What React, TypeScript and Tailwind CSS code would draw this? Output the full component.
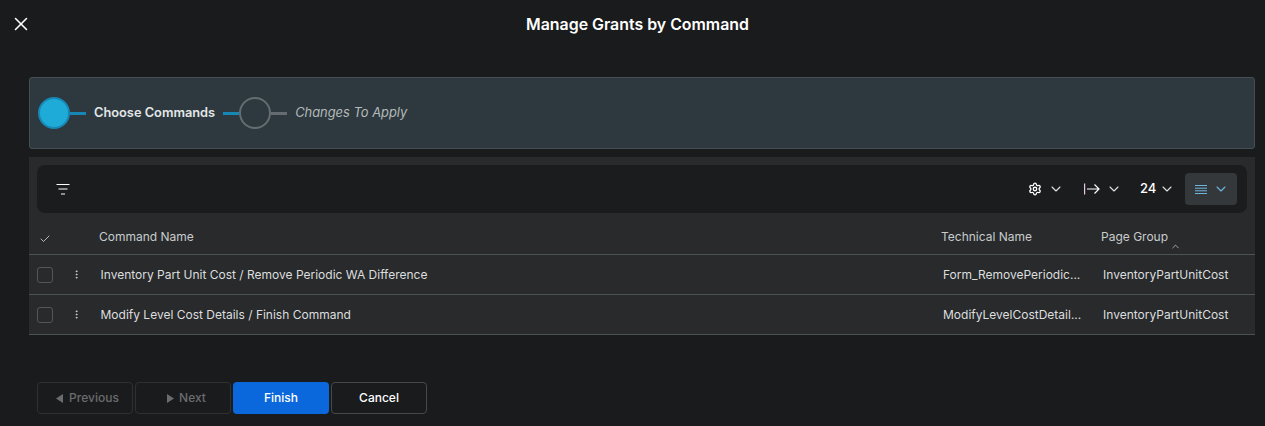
import React from "react";
import { ChevronDown, ChevronUp, Check, X, Settings, MoreVertical } from "lucide-react";

const rows = [
  {
    name: "Inventory Part Unit Cost / Remove Periodic WA Difference",
    tech: "Form_RemovePeriodic...",
    group: "InventoryPartUnitCost",
  },
  {
    name: "Modify Level Cost Details / Finish Command",
    tech: "ModifyLevelCostDetail...",
    group: "InventoryPartUnitCost",
  },
];

const App = () => {
  return (
    <div className="w-[1265px] h-[426px] overflow-hidden bg-[#1a1b1d] font-['Inter',sans-serif] text-white">
      <header className="relative h-[48px] flex items-center justify-center">
        <X className="absolute left-[10px] top-[13px] w-[22px] h-[22px] text-white" strokeWidth={1.7} />
        <h1 className="text-[15.9px] font-semibold ml-[10px] mt-[1px]">Manage Grants by Command</h1>
      </header>

      <div className="mt-[29px] ml-[29px] mr-[10px] h-[72px] flex items-center pl-2 bg-[#2d393e] border border-[#465054] rounded-[3px]">
        <div className="w-8 h-8 rounded-full bg-[#1fabd7] border-2 border-[#1787b5] shrink-0" />
        <div className="w-4 h-[3px] bg-[#1787b5]" />
        <span className="ml-2 text-[12.8px] font-semibold text-[#e3e6e8]">Choose Commands</span>
        <div className="ml-2 w-4 h-[3px] bg-[#1787b5]" />
        <div className="w-8 h-8 rounded-full border-2 border-[#656d71] shrink-0" />
        <div className="w-4 h-[3px] bg-[#656d71]" />
        <span className="ml-2 text-[12.9px] italic text-[#b4b9bb]">Changes To Apply</span>
      </div>

      <div className="mt-2 ml-[29px] mr-[10px] bg-[#282a2c]">
        <div className="pt-2 px-2">
          <div className="h-12 flex items-center justify-between rounded-lg bg-[#1b1c1e] pl-[19px] pr-[10px]">
            <svg width="14" height="11" viewBox="0 0 14 11" fill="none" stroke="white" strokeWidth="1">
              <path d="M0.5 0.5H13.5M2.5 5H11.5M5 10H9" />
            </svg>
            <div className="flex items-center text-[13px] font-medium">
              <Settings className="w-[14px] h-[14px]" strokeWidth={2.2} />
              <ChevronDown className="w-4 h-4 ml-[6px] text-[#dfe1e2]" strokeWidth={1.6} />
              <svg className="ml-[20px]" width="16" height="12" viewBox="0 0 16 12" fill="none" stroke="white" strokeWidth="1.2">
                <path d="M0.6 0.5V11.5" stroke="#e6c9e6" />
                <path d="M3 6H15M10.5 1.5L15 6L10.5 10.5" />
              </svg>
              <ChevronDown className="w-4 h-4 ml-[6px] text-[#dfe1e2]" strokeWidth={1.6} />
              <span className="ml-[18px] w-[15px]">24</span>
              <ChevronDown className="w-4 h-4 ml-[4px] text-[#dfe1e2]" strokeWidth={1.6} />
              <div className="ml-[10px] w-[52px] h-8 rounded-[4px] bg-[#35383b] flex items-center pl-[10px]">
                <svg width="12" height="9" viewBox="0 0 12 9" fill="none" stroke="#6cb6de" strokeWidth="1">
                  <path d="M0 0.5H12M0 3.2H12M0 5.8H12M0 8.5H12" />
                </svg>
                <ChevronDown className="w-4 h-4 ml-[6px] text-[#6cb6de]" strokeWidth={1.6} />
              </div>
            </div>
          </div>
        </div>

        <div className="relative h-[42px] pt-[6px] flex items-center border-b border-[#4b5356] text-xs text-[#c9cccd]">
          <Check className="absolute left-[10px] top-[20px] w-3 h-3 text-[#e5e7e8]" strokeWidth={1.5} />
          <span className="ml-[70px] w-[842px]">Command Name</span>
          <span className="w-[160px]">Technical Name</span>
          <span>Page Group</span>
          <ChevronUp className="absolute left-[1141px] top-[28px] w-[11px] h-[11px] text-[#d5d7d8]" strokeWidth={1.5} />
        </div>

        {rows.map((row) => (
          <div key={row.name} className="h-[40px] flex items-center border-b border-[#4b5356] text-xs text-[#dcdedf]">
            <div className="ml-2 w-4 h-4 rounded-[3px] border border-[#51575a]" />
            <MoreVertical className="ml-[18px] w-[11px] h-[11px] text-[#d5d7d8]" strokeWidth={2} />
            <span className="ml-[18.5px] w-[842.5px]">{row.name}</span>
            <span className="w-[160px]">{row.tech}</span>
            <span>{row.group}</span>
          </div>
        ))}
      </div>

      <div className="mt-[47px] ml-[37px] flex gap-[2px] text-xs font-medium">
        <button className="w-24 h-8 pl-[5px] flex items-center justify-center gap-[6px] rounded-[4px] border border-[#2e3032] text-[#6a6c6e]">
          <svg width="7" height="9" viewBox="0 0 7 9" fill="#6a6c6e"><path d="M7 0V9L0 4.5Z" /></svg>
          Previous
        </button>
        <button className="w-24 h-8 pl-[7px] flex items-center justify-center gap-[5px] rounded-[4px] border border-[#2e3032] text-[#6a6c6e]">
          <svg width="7" height="9" viewBox="0 0 7 9" fill="#6a6c6e"><path d="M0 0V9L7 4.5Z" /></svg>
          Next
        </button>
        <button className="w-24 h-8 rounded-[4px] bg-[#0b68dc] text-white">Finish</button>
        <button className="w-24 h-8 rounded-[4px] border border-[#46484a] text-white">Cancel</button>
      </div>
    </div>
  );
};

export default App;
